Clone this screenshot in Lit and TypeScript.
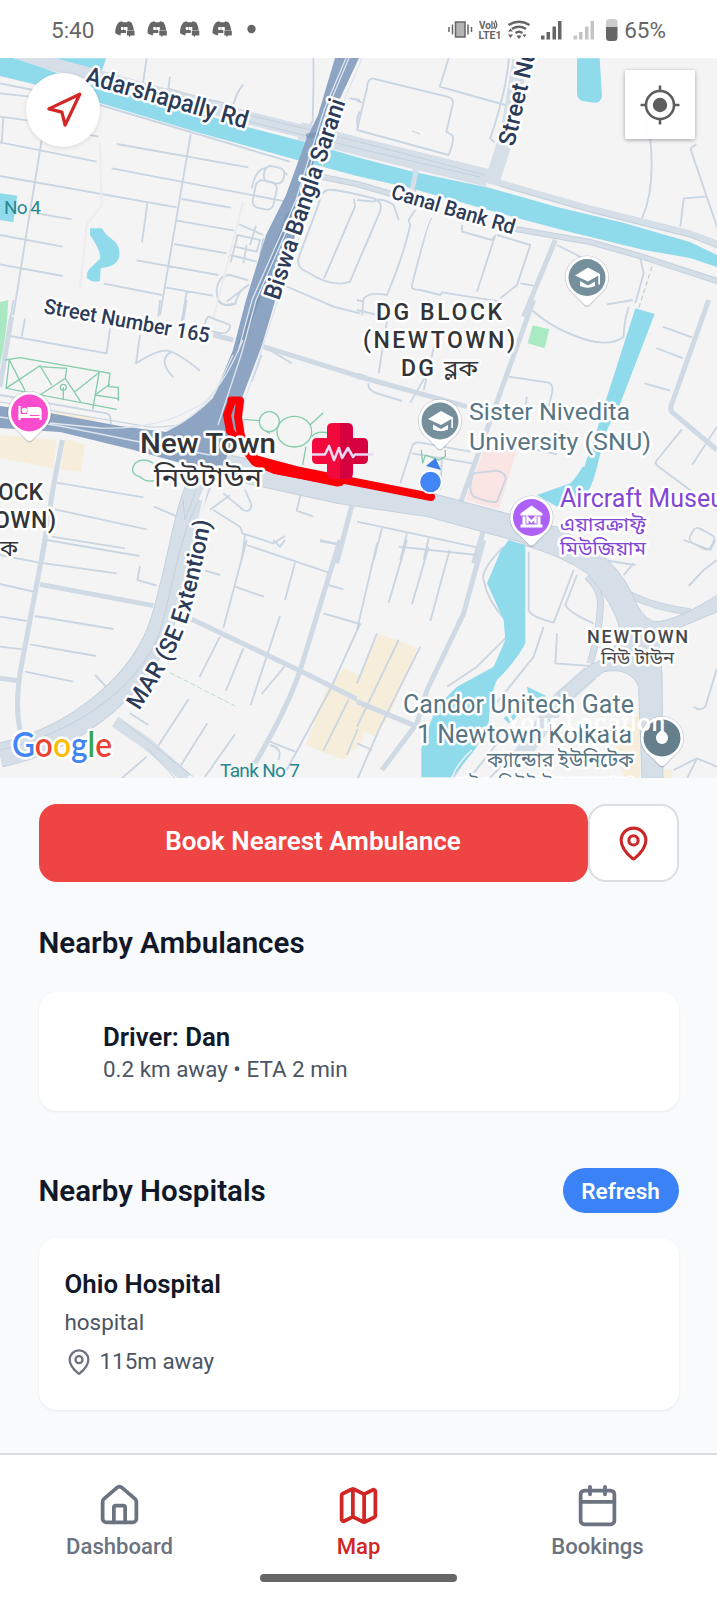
import { LitElement, html, svg, css } from "lit";
import { customElement, property } from "lit/decorators.js";

const icons: Record<string, unknown> = {
  home: svg`<path d="M15 21v-8a1 1 0 0 0-1-1h-4a1 1 0 0 0-1 1v8"/><path d="M3 10a2 2 0 0 1 .709-1.528l7-5.999a2 2 0 0 1 2.582 0l7 5.999A2 2 0 0 1 21 10v9a2 2 0 0 1-2 2H5a2 2 0 0 1-2-2z"/>`,
  map: svg`<path d="M14.106 5.553a2 2 0 0 0 1.788 0l3.659-1.83A1 1 0 0 1 21 4.619v12.764a1 1 0 0 1-.553.894l-4.553 2.277a2 2 0 0 1-1.788 0l-4.212-2.106a2 2 0 0 0-1.788 0l-3.659 1.83A1 1 0 0 1 3 19.381V6.618a1 1 0 0 1 .553-.894l4.553-2.277a2 2 0 0 1 1.788 0z"/><path d="M15 5.764v15"/><path d="M9 3.236v15"/>`,
  calendar: svg`<path d="M8 2v4"/><path d="M16 2v4"/><rect width="18" height="18" x="3" y="4" rx="2"/><path d="M3 10h18"/>`,
  pin: svg`<path d="M20 10c0 4.993-5.539 10.193-7.399 11.799a1 1 0 0 1-1.202 0C9.539 20.193 4 14.993 4 10a8 8 0 0 1 16 0"/><circle cx="12" cy="10" r="3"/>`,
  navigation: svg`<polygon points="3 11 22 2 13 21 11 13 3 11"/>`,
};

@customElement("line-icon")
class LineIcon extends LitElement {
  static styles = css`
    :host { display: block; flex: none; }
    svg { display: block; width: 100%; height: 100%; fill: none; stroke: currentColor; stroke-width: 2; stroke-linecap: round; stroke-linejoin: round; }
  `;
  @property() name = "pin";
  render() {
    return html`<svg viewBox="0 0 24 24">${icons[this.name]}</svg>`;
  }
}

@customElement("status-bar")
class StatusBar extends LitElement {
  static styles = css`
    :host { display: flex; align-items: center; justify-content: space-between; height: 58px; padding: 2px 51px 0 51px; box-sizing: border-box; background: #fff; color: #666; font: 400 22.5px/26px Roboto, sans-serif; }
    .side { display: flex; align-items: center; }
    .left { gap: 21px; }
    .notes { display: block; width: 142px; height: 20px; }
    .system { display: block; width: 172px; height: 26px; margin-right: 5px; }
    .volte { font: 700 11px Roboto, sans-serif; }
  `;
  render() {
    const discord = (x: number) => svg`<g transform="translate(${x} 0)">
      <path fill-rule="evenodd" d="M3.500 2.500 Q5 1.500 7 1.200 L8 2.200 H12 L13 1.200 Q15 1.500 16.500 2.500 Q18.500 6 19 10.500 H12.500 V7 H9 V10 H11 V13 H6 L5.500 15.500 Q2 14.500 .2 13 Q0 7 3.500 2.500 Z M6 7 H8.500 V10 H6 Z"/>
      <path d="M12 10.800 H19.500 V15.600 H15.500 L14.500 17.200 L13.800 15.600 H12 Z"/></g>`;
    return html`
      <div class="side left">
        <span>5:40</span>
        <svg class="notes" viewBox="0 0 142 20" fill="#666">
          ${[0, 32.3, 64.8, 97.3].map(discord)}
          <circle cx="136.500" cy="9" r="4.200"/>
        </svg>
      </div>
      <div class="side">
        <svg class="system" viewBox="447 16 172 26" fill="#666">
          <rect x="455.500" y="21" width="9.500" height="15" fill="#b5b5b5" stroke="#666" stroke-width="1.500"/>
          <path d="M452.500 23.500v10M449 26v5M468 23.500v10M471.500 26v5" stroke="#666" stroke-width="1.500"/>
          <text class="volte" x="479" y="28" textLength="12" lengthAdjust="spacingAndGlyphs">Vo</text>
          <path d="M492 20v8M493.500 21.500q2.200 3 0 6M495 19.500q3.500 4.500 0 8.500" fill="none" stroke="#666" stroke-width="1.300"/>
          <text class="volte" x="478.500" y="38" textLength="23" lengthAdjust="spacingAndGlyphs">LTE1</text>
          <g fill="none" stroke="#666" stroke-width="2.400"><path d="M508.500 24q10.500-6.500 21 0M512 28q7-4.500 14 0M515.500 32q3.500-2.500 7 0"/></g>
          <path d="M516.500 35q2.500-1.500 5 0l-2.500 3z"/>
          <path d="M508 30.500l2.500-3 2.500 3zM508 33.500l2.500 3.500 2.500-3.500zM522.500 33.500l2 3 2-3z"/>
          <path d="M541 34.500h3.500v4H541zM546.500 31h3.500v7.500h-3.500zM552.500 25.500h3.500v13h-3.500zM558 20h3.500v18.500H558z"/>
          <path fill="#c4c4c4" d="M573.500 34.500h3.500v4h-3.500zM579 31h3.500v7.500H579zM585 25.500h3.500v13H585zM590.500 20h3.500v18.500h-3.500z"/>
          <path fill="#ccc" d="M606 27v-6q0-3 4-3h3.500q4 0 4 3v6z"/>
          <path d="M606 26h11.500v10.500q0 3.500-3.500 3.500H609.500q-3.500 0-3.500-3.500z"/>
        </svg>
        <span>65%</span>
      </div>`;
  }
}

@customElement("city-map")
class CityMap extends LitElement {
  static styles = css`
    :host { display: block; position: relative; height: 720px; overflow: hidden; background: #f5f4f5; }
    .canvas { display: block; width: 717px; height: 720px; font-family: Roboto, "Noto Sans Bengali", sans-serif; }
    .minor { fill: none; stroke: #c9d5e1; stroke-width: 5.500; stroke-linejoin: round; stroke-linecap: butt; }
    .mid { fill: none; stroke: #cfdae4; stroke-width: 15; stroke-linejoin: round; }
    .road { fill: none; stroke: #d6dfe8; stroke-linejoin: round; }
    .edge { fill: none; stroke: #c3d0dc; stroke-linejoin: round; }
    .main { fill: #8da5c2; }
    .hair { fill: none; stroke: #dde5ee; stroke-width: 1.300; }
    .water { fill: #8fdaeb; }
    .park { fill: none; stroke: #86ccac; stroke-width: 4; }
    .build { fill: #f6eedb; }
    .halo { paint-order: stroke; stroke: #fff; stroke-width: 5px; stroke-linejoin: round; }
    .street { fill: #2b3b58; font-weight: 500; }
    .place { fill: #333438; font-weight: 500; }
    .thin { font-weight: 400; }
    .poi { fill: #587584; font-weight: 400; }
    .museum { fill: #8347d6; font-weight: 400; }
    .tank { fill: #25888f; }
    .google { font-family: Lato, sans-serif; font-weight: 600; }
    .follow { position: absolute; left: 26px; top: 15px; width: 74px; height: 74px; border-radius: 50%; background: #fff; display: grid; place-items: center; color: #d42626; box-shadow: 0 1px 4px rgba(0,0,0,.12); }
    .follow line-icon { width: 39px; height: 39px; }
    .gps { position: absolute; right: 22px; top: 12px; width: 70px; height: 69px; background: rgba(255,255,255,.93); box-shadow: 0 1px 4px rgba(0,0,0,.35); border-radius: 2px; display: grid; place-items: center; }
    .gps svg { width: 40px; height: 40px; }
  `;

  private pin(x: number, y: number, color: string, glyph: unknown) {
    return svg`<g transform="translate(${x} ${y})">
      <path d="M0 29.500Q-2 29.500-4 27L-12 18.500A22 22 0 1 1 12 18.500L4 27Q2 29.500 0 29.500Z" fill="#506070" opacity=".28"/>
      <path d="M0 28Q-2 28-4 25.500L-12 17.500A21.300 21.300 0 1 1 12 17.500L4 25.500Q2 28 0 28Z" fill="#fff"/>
      <circle r="18.500" fill=${color}/>${glyph}</g>`;
  }

  render() {
    const cap = svg`<path d="M-12-2L1-10L13-3.500V7H11.300V-2L1 4Z M-7 3.500L1 8L8 4V8.500Q1 12-7 8.500Z" fill="#fff"/>`;
    const bed = svg`<path d="M-10-7V7M-10 4H11V7M11 4V-2Q11-5 8-5H-1V2H-10" fill="none" stroke="#fff" stroke-width="2.200"/><path d="M-1-5H8Q11-5 11-2V2H-1Z" fill="#fff"/><circle cx="-5" cy="-2.500" r="2.700" fill="#fff"/>`;
    const museum = svg`<path d="M-11-4L0-12L11-4V-2H-11ZM-9-1H-6V7H-9ZM6-1H9V7H6ZM-11 7H11V10H-11Z" fill="#fff"/><path d="M-4 6V0L0 4L4 0V6" fill="none" stroke="#fff" stroke-width="2.300"/>`;
    return html`
      <svg class="canvas" viewBox="0 58 717 720">
        <defs>
          <linearGradient id="cross"><stop offset=".5" stop-color="#f20a3c"/><stop offset=".5" stop-color="#d7003f"/></linearGradient>
          <path id="extention" d="M139 711C160 678 180 648 190 612S206 548 214 505"/>
        </defs>

        <g transform="translate(0 55) scale(.33333)">
          <path fill="#a9e8c2" d="M0 742L25 735Q20 850 0 930Z"/>
          <path class="minor" d="M0 85L100 105M0 115L90 125M0 185L110 200M10 185L5 265L0 262L290 320M440 10L428 90M510 65L505 100Q560 120 700 150Q710 110 730 88M940 10Q942 60 938 200L925 215M125 255L40 780M350 267L745 337M335 340L860 440M0 363L530 457M572 238L480 780M545 432L692 458M530 497L703 527M522 567L680 595M410 616L655 660M312 686L485 720M495 697L638 722M442 445L426 562M560 710L545 800M110 475L215 493M0 540L188 575M0 628L188 663M270 240L295 245M300 150L870 320"/>
          <g class="minor"><rect x="792" y="335" width="60" height="48" rx="18" transform="rotate(12 820 360)"/><rect x="762" y="378" width="64" height="84" rx="20" transform="rotate(12 795 420)"/><path d="M800 340Q770 335 755 400M850 350L862 360M715 507L790 540M768 512L750 570M712 540L780 555L770 590L705 575ZM690 600L770 620M740 570L730 625M712 545L692 622M790 550L780 600M745 676L690 660Q655 660 650 705Q650 750 680 750L705 745Q720 700 745 690L680 740"/></g>
          <path class="minor" stroke-width="4" d="M1048 130L1080 135M1080 170Q1065 190 1075 220M985 405Q1000 400 1120 430Q1150 440 1140 470L1050 680Q1000 700 920 650Q890 640 895 610L955 450Q965 405 985 405M1062 432L1065 455L972 670M850 690L1000 755L1080 775"/>
          <path fill="none" stroke="#ecebee" stroke-width="6" d="M300 260L305 450L260 510L240 700M730 440L640 790"/>
          <path class="water" d="M150 10H318L305 50L240 40ZM0 415L52 422L40 502L0 495Z"/>
          <path class="water" d="M270 520H305L318 538L345 560Q360 575 358 605Q350 630 325 635L302 640L300 678Q278 685 260 668Q260 645 275 635L300 612Q305 590 270 540Z"/>
        </g>

        <g transform="translate(357 55) scale(.33333)">
          <path class="minor" d="M275 10L248 95L445 150M455 10Q450 100 400 250L412 262M0 138L15 142M45 70L270 125Q290 130 288 145L268 230L285 240Q295 250 275 300L0 225L20 140L30 100Q30 75 45 70M870 200Q860 230 880 255Q895 400 855 490M970 515L980 430L1045 425M1000 280L1018 268M1000 280L1085 530M0 435L50 440Q70 425 110 450L125 495M175 465L155 495L160 510Q140 600 90 720Q40 710 20 730L15 780M0 735L18 740M315 510V530L405 555L415 540M225 490Q215 490 165 690Q160 705 190 705L250 720L255 712L430 740M420 540L520 570L480 690L430 730M415 540L360 710M490 685L530 692M600 570L660 600L690 620M750 748L828 735M850 610L860 655L835 745"/>
          <path class="mid" d="M175 340L170 410M595 555L500 785"/>
          <path d="M885 635L845 760" fill="none" stroke="#c1d5cf" stroke-width="4" stroke-dasharray="14 9"/>
          <path class="water" d="M660 10H728L735 125Q730 145 710 143L675 138Q660 130 660 115Z"/>
        </g>

        <g transform="translate(0 300) scale(.33333)">
          <path class="build" d="M0 405L170 420L160 505L0 475ZM195 415L255 435L243 517L183 508ZM165 330L290 355L280 365L165 350Z"/>
          <path class="minor" d="M40 0L0 260M75 55L65 110M30 108L320 160L330 85M420 105L408 190Q470 150 500 152Q530 155 600 212M515 155Q470 180 520 232M480 0L475 50M560 0L550 60M0 285L320 340Q335 345 332 372M625 50Q600 80 640 95Q690 110 690 75ZM655 0Q670 25 710 10M800 145L875 190M785 165L755 245M170 548L430 592M462 620L545 655M165 628L440 688M155 710L375 745M905 570L890 632L940 650M960 724L1010 732M640 630L720 680L728 700L820 730L855 708M735 705L725 780M670 580L730 630Q750 640 755 615L735 570M630 630L690 585"/>
          <path class="mid" d="M35 50L0 260M640 105L700 120M790 140L1080 230M187 420L160 560L125 780M1060 600L1010 790"/>
          <path class="park" d="M15 180L60 173L330 220L325 260L355 262V300L350 295L285 285M28 180L18 265L350 328M28 180L75 272M18 265L120 197L155 255M118 200L200 205L196 235L120 285M196 235L242 305M300 215L225 275M298 215L278 328M285 285L330 252M190 262V300M730 358L780 362M930 375L970 338M935 410Q950 390 990 400M918 440L908 495M800 395L810 400M460 490Q430 470 405 490Q385 520 420 530Q440 550 470 540"/>
          <circle class="park" cx="190" cy="262" r="9"/><circle class="park" cx="808" cy="365" r="30"/><ellipse class="park" cx="883" cy="395" rx="52" ry="46"/>
        </g>

        <g transform="translate(357 300) scale(.33333)">
          <path fill="#a9eac2" d="M527 76L577 88L563 145L512 130Z"/>
          <path fill="#fae4e4" d="M380 450H480L425 628L325 600Z"/>
          <path class="minor" d="M525 30Q590 90 690 120Q760 140 800 110M0 30L80 50M95 30L65 220M240 115L230 145L200 270M35 250Q30 270 60 280L135 303M205 230L160 308M455 230L575 248Q590 255 585 280L575 320M510 290L505 320M815 20Q800 70 800 110M917 80L1005 112M898 144L978 175M862 250L940 272M975 388L900 480Q890 490 905 500L1080 630M1080 380L1005 495M540 450L600 462M0 220L30 230M130 550L165 440Q170 425 190 428L340 455M165 460L345 490M255 470L250 570M345 520L420 512Q450 520 445 540L420 605Q400 610 350 590Q330 570 350 520M0 665L375 745M75 685L50 780M150 700L130 780M215 715L200 780"/>
          <path class="mid" d="M530 0L310 610M0 228L330 320M1055 0L945 310Q935 330 950 340L1080 450M380 690L350 790"/>
          <rect class="minor" x="1000" y="690" width="70" height="48" rx="15" transform="rotate(28 1030 715)"/>
          <path class="park" d="M193 450L197 490L205 465L245 480L265 470V450"/>
          <path class="water" d="M835 25L893 42L790 310L750 390L725 480Q710 550 690 580Q640 600 600 620L540 585L640 550Q690 500 720 390L750 290Z"/>
          <path d="M690 465L680 500" stroke="#f5f4f5" stroke-width="5"/>
        </g>

        <g transform="translate(0 540) scale(.33333)">
          <path class="build" d="M1030 385L1090 410V600L1030 660L918 615L975 455Z"/>
          <path class="minor" d="M140 0L418 48M420 78L412 120L470 137M0 45L118 68L350 100M0 132L100 155M105 228L340 267M0 230L80 243M90 313L288 348M0 320L70 328M75 395L220 425M285 405L330 452M390 520L445 555M740 0L670 265M740 15L985 97M885 68L855 180M840 228L752 495M705 140L792 170M615 92L660 105M960 0L1010 12M820 0L840 20L855 0M985 135L1030 148M970 220L1080 252L990 450L860 690M660 290L598 412M730 325L678 452M855 378L785 462M566 477L470 625M622 550L540 680M705 583L615 710M440 650L365 715M1045 480L970 632M1085 540L1040 645M810 605L885 635M810 615Q850 625 835 660"/>
          <path class="mid" d="M135 0L60 400Q45 500 60 570M120 133L460 197M0 415L60 423M575 238L900 392L1090 487M1020 0L900 392Q860 510 765 670"/>
          <path class="road" stroke-width="35" d="M345 545L440 610L560 715"/>
          <path class="edge" stroke-width="3" d="M370 545L580 710M440 622L525 715"/>
          <path d="M510 398L705 498" fill="none" stroke="#b7dcc7" stroke-width="3" stroke-dasharray="16 7"/>
        </g>

        <path class="edge" stroke-width="25" d="M205 462L342 492L430 505L522 530L540 536"/>
        <g transform="translate(357 540) scale(.33333)">
          <path class="build" d="M65 280L180 325L100 520L55 590L0 565V430ZM770 600L850 515V715H800ZM920 690H945V715H925Z"/>
          <path class="minor" d="M150 0L95 188M215 20L165 192M278 30L220 243M60 10L0 270M125 20L360 45M440 20Q370 90 380 120Q390 180 445 240L450 290L360 380L270 440M60 280L0 430M125 300L0 560M190 320L70 560L0 720M515 35V210Q520 230 590 248L650 90M660 105L625 195Q640 220 710 250M600 280L595 370L700 378M560 260L530 350L410 500M830 70L800 105M740 60L835 75M980 0L1060 30L1075 0M1080 60L1040 90L995 138M1080 385L1045 500Q1030 515 1010 500M0 610L45 630M950 690L1020 655L1080 680M1020 655L990 715M420 610L340 712M490 620L400 712M350 620L290 712"/>
          <path class="mid" d="M380 0L320 220L210 450L180 550L75 690M0 485L180 560"/>
          <path class="water" d="M455 0L505 15V310Q480 360 420 420Q400 460 395 550Q370 610 345 640L285 712H193V625Q210 570 240 500L300 440L410 380L445 300L440 240L390 130L430 35ZM510 440L568 468L490 525L455 550L440 535L515 470Z"/>
          <path d="M345 630Q300 670 285 712" stroke="#f5f4f5" stroke-width="4" fill="none"/>
          <path class="edge" stroke-width="21" d="M690 110Q735 150 730 200Q728 270 700 370M820 165Q900 205 1000 215"/>
          <path class="road" stroke-width="16" d="M690 110Q735 150 730 200Q728 270 700 370M820 165Q900 205 1000 215"/>
          <path class="road" stroke-width="50" d="M700 400L610 480L490 650"/>
          <path d="M480 -50L600 -40L700 20Q780 70 825 160Q850 230 890 245Q950 248 1090 160V212Q960 265 905 290L915 400L918 715H855L845 440Q820 380 740 395Q690 430 640 480L600 460L700 375Q780 345 790 270Q770 190 690 100Q620 50 500 15Z" fill="#d6dfe8" stroke="#c3d0dc" stroke-width="3"/>
        </g>

        <path class="edge" stroke-width="25" d="M212 460C185 500 185 545 163 620C145 680 80 738 0 755"/>
        <path class="road" stroke-width="23" d="M212 460C185 500 185 545 163 620C145 680 80 738 0 755"/>
        <path class="edge" stroke-width="1" d="M200 498C182 530 176 570 162 625C146 682 80 732 0 750M183 500L185 520L196 490"/>
        <path class="road" stroke-width="23" d="M205 462L342 492L430 505L522 530L545 537"/>
        <path d="M200 500L207 485L198 528" stroke="#f5f4f5" stroke-width="3" fill="none"/>

        <path class="road" stroke-width="13" d="M17 55L90 74L245 117L305 132L357 146L420 162"/>
        <path class="road" stroke-width="18" d="M300 131L357 146L488 178"/>
        <path class="edge" stroke-width="1" d="M245 114L360 142L485 175M250 122L390 156L480 177M420 134L412 131"/>
        <path class="road" stroke-width="7" d="M485 179L590 209L690 234L720 245"/>
        <path class="edge" stroke-width="1" d="M500 186L590 212L690 237L720 249"/>
        <path class="road" stroke-width="15" d="M520 60L508 132L492 182"/>
        <path class="edge" stroke-width="6" d="M303 173L357 184L395 195M510 228L590 242L640 256L720 282"/>
        <path class="road" stroke-width="4" d="M303 173L357 184L395 195M510 228L590 242L640 256L720 282"/>
        <path class="water" d="M0 58H13L43 68L100 88L160 102L247 127L305 142L360 158L414 172L490 188L557 207L624 223L690 242L717 255V267L690 258L644 250L570 232L517 218L410 188L357 176L297 160L200 133L90 100L33 84L0 76Z"/>
        <path class="road" stroke-width="5" d="M417 167L412 190"/>

        <path class="edge" stroke-width="1" d="M233 400Q200 428 150 427L60 412L0 402"/>
        <path class="main" d="M335 58H359L337 105L318 135L306 200L276 298L262 345L242 398L236 430L224 465L195 467L130 449L60 432L0 428V406L50 413L120 426L166 432Q195 417 213 398L233 350L246 300L266 235L286 195L306 140L318 115Z"/>
        <path d="M306 136L318 135L300 205L288 216L265 280L240 345" fill="none" stroke="#7790b0" stroke-width="5" opacity=".65"/>
        <path class="hair" d="M349 58L327 110L300 200L256 300L242 352L218 425M346 58L324 110L296 200L252 300L238 352M362 58L340 110L310 205L278 300L246 397L238 430M0 417L60 426L135 441L210 455M233 355L215 393Q190 422 166 430M243 340Q222 390 200 405Q160 430 100 428L50 423"/>

        <g fill="none" stroke="#fb0007" stroke-linecap="round" stroke-linejoin="round">
          <path stroke-width="8" d="M232 401L227 415L230 431L244 448L254 461L275 470L340 482M240 401L238 417L241 436L255 459L300 471L345 480L431 497"/>
          <path stroke-width="11" d="M256 461L275 468L338 481"/>
          <path stroke-width="7" d="M231 400H240"/>
        </g>
        <path d="M312 443Q312 438 317 438H327V428Q327 423 333 423H347Q353 423 353 428V438H363Q368 438 368 443V459Q368 464 363 464H353V473Q353 479 347 479H333Q327 479 327 473V464H317Q312 464 312 459Z" fill="url(#cross)"/>
        <path d="M312 454.500H325L329 446L334 460L339 448L342 458L348 448L353 457L355 454.500H373" fill="none" stroke="#ead8f4" stroke-width="2.600" stroke-linejoin="round"/>

        <g class="street">
          <text class="halo" font-size="25" textLength="168" lengthAdjust="spacingAndGlyphs" transform="translate(84 83) rotate(15.800)">Adarshapally Rd</text>
          <text class="halo" font-size="24" textLength="210" lengthAdjust="spacingAndGlyphs" transform="translate(279 301) rotate(-71.500)">Biswa Bangla Sarani</text>
          <text class="halo" font-size="23.500" transform="translate(514 147) rotate(-77)">Street Number</text>
          <text class="halo" font-size="21" textLength="128" lengthAdjust="spacingAndGlyphs" transform="translate(390 198) rotate(16.500)">Canal Bank Rd</text>
          <text class="halo" font-size="21" textLength="168" lengthAdjust="spacingAndGlyphs" transform="translate(43 313) rotate(10.200)">Street Number 165</text>
          <text class="halo" font-size="23.500"><textPath href="#extention" textLength="205" lengthAdjust="spacingAndGlyphs">MAR (SE Extention)</textPath></text>
        </g>
        <g class="tank">
          <text x="4" y="213.500" font-size="19" textLength="37">No 4</text>
          <text x="220" y="777" font-size="19" textLength="80">Tank No 7</text>
        </g>
        ${this.pin(587, 277.5, "#758f9c", cap)}
        ${this.pin(440, 421, "#758f9c", cap)}
        ${this.pin(531.5, 517.5, "#ad61f7", museum)}
        ${this.pin(29.5, 413, "#f94dcd", bed)}
        ${this.pin(662, 738, "#667f8c", svg`<path d="M-6 0Q-6-5 0-8Q6-5 6 0A6 6 0 0 1-6 0Z" fill="#fff"/>`)}
        <g class="place">
          <text class="halo" x="140" y="453" font-size="28.500" textLength="136" lengthAdjust="spacingAndGlyphs">New Town</text>
          <text class="halo thin" x="154" y="487" font-size="27" textLength="108" lengthAdjust="spacingAndGlyphs">নিউটাউন</text>
          <text class="halo" x="376" y="319.500" font-size="23" textLength="126">DG BLOCK</text>
          <text class="halo" x="363" y="347.500" font-size="23" textLength="152">(NEWTOWN)</text>
          <text class="halo" x="401" y="375.500" font-size="23" textLength="33">DG</text>
          <text class="halo thin" x="444" y="375.500" font-size="23" textLength="34" lengthAdjust="spacingAndGlyphs">ব্লক</text>
          <text class="halo" x="-2" y="499.500" font-size="23" textLength="45">OCK</text>
          <text class="halo" x="-6" y="527.500" font-size="23" textLength="62">OWN)</text>
          <text class="halo thin" x="0" y="555.500" font-size="23" textLength="18" lengthAdjust="spacingAndGlyphs">ক</text>
          <text class="halo" x="587" y="642.500" font-size="18" textLength="101" fill="#45484d">NEWTOWN</text>
          <text class="halo thin" x="601" y="664" font-size="18" textLength="73" lengthAdjust="spacingAndGlyphs" fill="#45484d">নিউ টাউন</text>
        </g>
        <g class="poi">
          <text class="halo" x="469" y="419.500" font-size="24.500" textLength="161" lengthAdjust="spacingAndGlyphs">Sister Nivedita</text>
          <text class="halo" x="469" y="449.500" font-size="24.500" textLength="182" lengthAdjust="spacingAndGlyphs">University (SNU)</text>
          <text class="halo" x="403" y="713" font-size="25" textLength="231">Candor Unitech Gate</text>
          <text class="halo" x="417" y="743" font-size="25" textLength="215">1 Newtown Kolkata</text>
          <text class="halo" x="487" y="767" font-size="20" textLength="147" lengthAdjust="spacingAndGlyphs">ক্যান্ডোর ইউনিটেক</text>
          <text class="halo" x="452" y="792" font-size="20" textLength="181" lengthAdjust="spacingAndGlyphs">গেট ১ নিউটাউন কলকাতা</text>
        </g>
        <text x="506" y="731" font-size="24" fill="#fff" font-weight="500" textLength="159">Your Location</text>
        <g class="museum">
          <text class="halo" x="560" y="507" font-size="25">Aircraft Museum</text>
          <text class="halo" x="560" y="531" font-size="19" textLength="86" lengthAdjust="spacingAndGlyphs">এয়ারক্রাফ্ট</text>
          <text class="halo" x="560" y="555" font-size="19" textLength="86" lengthAdjust="spacingAndGlyphs">মিউজিয়াম</text>
        </g>
        <path d="M435.500 458L441 470L426 466Z" fill="#3e7fe8"/>
        <circle cx="430.500" cy="482" r="12" fill="#fff"/><circle cx="430.500" cy="482" r="10.300" fill="#4285f4"/>
        <text class="halo google" x="12" y="757" font-size="34" textLength="100" lengthAdjust="spacingAndGlyphs"><tspan fill="#4285f4">G</tspan><tspan fill="#ea4335">o</tspan><tspan fill="#fbbc05">o</tspan><tspan fill="#4285f4">g</tspan><tspan fill="#34a853">l</tspan><tspan fill="#ea4335">e</tspan></text>
      </svg>
      <div class="follow"><line-icon name="navigation"></line-icon></div>
      <div class="gps"><svg viewBox="-20 -20 40 40" fill="none" stroke="#5e5e5e" stroke-width="2.600"><circle r="14"/><circle r="7.200" fill="#5e5e5e" stroke="none"/><path d="M0-19.500V-13M0 13V19.500M-19.500 0H-13M13 0H19.500"/></svg></div>`;
  }
}

@customElement("tab-bar")
class TabBar extends LitElement {
  static styles = css`
    :host { display: flex; flex-direction: column; height: 147px; box-sizing: border-box; border-top: 2px solid #d8dadd; background: #fff; font: 500 22.100px/26px Roboto, sans-serif; color: #6b7280; }
    .tabs { display: grid; grid-template-columns: repeat(3, 1fr); padding-top: 28px; }
    .tab { display: flex; flex-direction: column; align-items: center; gap: 5px; }
    .tab line-icon { width: 45px; height: 45px; }
    .active { color: #d12626; }
    .handle { width: 197px; height: 8px; margin: 15px auto 0; border-radius: 4px; background: #666; }
  `;
  render() {
    const tabs = [["home", "Dashboard"], ["map", "Map"], ["calendar", "Bookings"]];
    return html`<div class="tabs">${tabs.map(
      ([icon, label]) => html`<div class="tab ${icon === "map" ? "active" : ""}"><line-icon name=${icon}></line-icon><span>${label}</span></div>`
    )}</div><div class="handle"></div>`;
  }
}

@customElement("app-root")
class AppRoot extends LitElement {
  static styles = css`
    :host { display: flex; flex-direction: column; width: 717px; height: 1600px; overflow: hidden; background: #f9fafb; font-family: Roboto, sans-serif; color: #111827; }
    .content { flex: 1; padding: 26px 38.500px 0; }
    .actions { display: flex; height: 78px; }
    .book { flex: 1; display: grid; place-items: center; background: #ef4444; color: #fff; border-radius: 18px; font-weight: 600; font-size: 26px; padding-bottom: 4px; box-sizing: border-box; }
    .locate { width: 91px; box-sizing: border-box; border: 2px solid #dcdee2; border-radius: 18px; background: #fff; display: grid; place-items: center; color: #cc2727; }
    .locate line-icon { width: 37px; height: 37px; }
    .heading { margin: 0; font-weight: 600; font-size: 29.500px; line-height: 36px; }
    .ambulances { margin-top: 43px; }
    .card { background: #fff; border-radius: 18px; box-shadow: 0 1px 3px rgba(0,0,0,.07); box-sizing: border-box; }
    .driver { height: 119px; margin-top: 31px; padding: 29px 64.500px 0; }
    .title { font-weight: 600; font-size: 25.800px; line-height: 32px; }
    .detail { font-size: 22.400px; line-height: 33px; color: #4b5563; }
    .row { display: flex; align-items: center; justify-content: space-between; margin-top: 57px; }
    .refresh { width: 116px; height: 45px; border-radius: 23px; background: #3b82f6; color: #fff; font-weight: 600; font-size: 22.500px; display: grid; place-items: center; }
    .hospital { height: 172px; margin-top: 25px; padding: 30px 26px 0; }
    .kind { margin-top: 6px; }
    .distance { display: flex; align-items: center; gap: 7px; margin-top: 6px; }
    .distance line-icon { width: 28px; height: 28px; color: #6b7280; }
  `;
  render() {
    return html`
      <status-bar></status-bar>
      <city-map></city-map>
      <div class="content">
        <div class="actions">
          <div class="book">Book Nearest Ambulance</div>
          <div class="locate"><line-icon name="pin"></line-icon></div>
        </div>
        <h2 class="heading ambulances">Nearby Ambulances</h2>
        <div class="card driver">
          <div class="title">Driver: Dan</div>
          <div class="detail">0.2 km away • ETA 2 min</div>
        </div>
        <div class="row"><h2 class="heading">Nearby Hospitals</h2><div class="refresh">Refresh</div></div>
        <div class="card hospital">
          <div class="title">Ohio Hospital</div>
          <div class="detail kind">hospital</div>
          <div class="detail distance"><line-icon name="pin"></line-icon>115m away</div>
        </div>
      </div>
      <tab-bar></tab-bar>`;
  }
}
